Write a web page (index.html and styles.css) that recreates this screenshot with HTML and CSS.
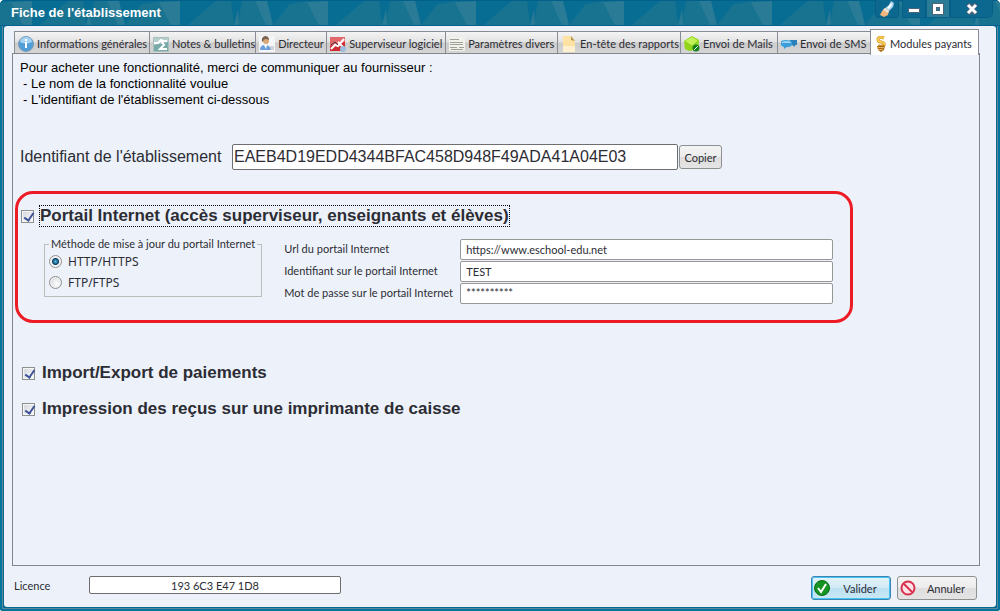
FILE: index.html
```html
<!DOCTYPE html>
<html lang="fr">
<head>
    <meta charset="UTF-8">
    <meta name="viewport" content="width=device-width, initial-scale=1.0">
    <title>Fiche de l'établissement</title>
    <link rel="stylesheet" href="styles.css">
</head>
<body>
    <div class="window">
        <header class="titlebar">
            <svg class="titlebar-pattern" width="100%" height="26" aria-hidden="true">
                <defs>
                    <pattern id="facets" x="33" width="148" height="26" patternUnits="userSpaceOnUse">
                        <rect width="148" height="26" fill="#086d93"/>
                        <path d="M7 25L35 1h15l3 24zM57 25l4-24h13l11 24z" fill="#187391"/>
                        <path d="M92 25l17-21 19-3 10 24z" fill="#187391"/>
                        <path d="M74 1h12l6 24h-7zM126 2l21-1v24h-9zM53 25l4-15 1 15z" fill="#2a7b95"/>
                    </pattern>
                </defs>
                <rect width="100%" height="26" fill="url(#facets)"/>
                <path d="M0 .5h3000M0 25.500h3000" stroke="#01618c"/>
            </svg>
            <h1>Fiche de l'établissement</h1>
            <div class="window-buttons">
                <button type="button" class="brush" aria-label="Apparence">
                    <svg width="16" height="18" viewBox="0 0 16 18">
                        <path d="M12 1l3 2-1 4-5 5-4-3 5-4z" fill="#a9d3f2"/>
                        <path d="M12 3l1 2-3 4-2-1z" fill="#fff"/>
                        <path d="M6 8l4 3-1 4-4 2-4-2 2-4z" fill="#f0b67c"/>
                        <path d="M6 8l4 3-1 2-5-3z" fill="#eee0d0"/>
                    </svg>
                </button>
                <button type="button" aria-label="Réduire">
                    <svg width="12" height="14" viewBox="0 0 12 14"><path d="M.5 6.500h11v4H.5z" fill="#fff" stroke="#4d6478"/></svg>
                </button>
                <button type="button" class="maximize" aria-label="Agrandir">
                    <svg width="12" height="12" viewBox="0 0 12 12"><path d="M2.500 2.500h7v7h-7z" fill="none" stroke="#4d6478" stroke-width="5"/><path d="M2.500 2.500h7v7h-7z" fill="none" stroke="#fff" stroke-width="3"/></svg>
                </button>
                <button type="button" class="close" aria-label="Fermer">
                    <svg width="14" height="12" viewBox="0 0 14 12"><path d="M3 1l8 10M11 1L3 11" stroke="#4d6478" stroke-width="5"/><path d="M3 2l8 8M11 2l-8 8" stroke="#fff" stroke-width="3"/></svg>
                </button>
            </div>
        </header>

        <main>
            <div class="tabs" role="tablist">
                <button type="button" role="tab">
                    <svg width="16" height="16" viewBox="0 0 16 16"><circle cx="8" cy="8" r="7.500" fill="#4f9ed8" stroke="#7f9db5"/><path d="M2 6a6 5 0 0 1 12 0q-6 3-12 0z" fill="#a6d3f3"/><path d="M8 3v2M7 7h1v5" stroke="#fff" stroke-width="2" fill="none"/></svg>
                    Informations générales
                </button>
                <button type="button" role="tab">
                    <svg width="16" height="16" viewBox="0 0 16 16"><path d="M.5 1.500h15v14H.5z" fill="#78aaa8" stroke="#a9bfbe"/><path d="M1 2h14v4L1 9z" fill="#b4cfcd"/><path d="M1 7h4l3-3 2 1M14 5H8l3 4-4 4h7" stroke="#fff" stroke-width="2" fill="none"/></svg>
                    Notes &amp; bulletins
                </button>
                <button type="button" role="tab">
                    <svg width="16" height="16" viewBox="0 0 16 16"><path d="M0 0h16v16H0z" fill="#f4f5f7"/><path d="M1 14q0-5 5-5t6 5z" fill="#6b9fdc"/><path d="M5 9h3l-1 4z" fill="#fff"/><circle cx="7" cy="5" r="3" fill="#d9a878"/><path d="M3 6q-1-5 3-6 4 0 4 4-4-2-5 0z" fill="#7b6450"/><path d="M11 11h4M11 13h4" stroke="#aab4c0"/></svg>
                    Directeur
                </button>
                <button type="button" role="tab">
                    <svg width="16" height="16" viewBox="0 0 16 16"><path d="M0 1h15v14H0z" fill="#cf2b32"/><path d="M0 1h15v5L0 10z" fill="#e3686c"/><path d="M1 13l4-4 3 1 6-7M8 6l6 6" stroke="#fff" stroke-width="2" fill="none"/><path d="M1 9l4-3 3 3" stroke="#45313a" fill="none"/><circle cx="13" cy="13" r="3" fill="#9dbddf"/></svg>
                    Superviseur logiciel
                </button>
                <button type="button" role="tab">
                    <svg width="16" height="16" viewBox="0 0 16 16"><path d="M0 1h16v14H0z" fill="#f1f1ec"/><path d="M1 3.500h9M1 6.500h13M1 8.500h13M1 11.500h7M10 11.500h5M2 13.500h12" stroke="#9da196"/></svg>
                    Paramètres divers
                </button>
                <button type="button" role="tab">
                    <svg width="16" height="16" viewBox="0 0 16 16"><path d="M2 0h8l4 5v11H2z" fill="#fde2a4"/><path d="M2 10h12v6H2z" fill="#fff0cf"/><path d="M10 0l4 5-4-1z" fill="#b99756"/></svg>
                    En-tête des rapports
                </button>
                <button type="button" role="tab">
                    <svg width="16" height="16" viewBox="0 0 16 16"><path d="M0 5l8-5 7 4-1 9-9 2-4-2z" fill="#91d718"/><path d="M1 5l7-4 6 4-6 5z" fill="#c2f255"/><path d="M1 6l7 4 6-5" stroke="#8ecb28" fill="none"/><circle cx="12" cy="12" r="3.500" fill="#14841f"/><path d="M10 14l4-4" stroke="#fff" fill="none"/></svg>
                    Envoi de Mails
                </button>
                <button type="button" role="tab">
                    <svg width="16" height="16" viewBox="0 0 16 16"><path d="M9 4h7v5h-2v2l-3-2H9z" fill="#2b82ba"/><path d="M0 6q0-2 5-2t6 2v3q-1 2-5 2l-3 2v-2q-3-1-3-2z" fill="#3c9fdb"/><path d="M1 6q4-2 9 0v1H1z" fill="#9cd6f5"/></svg>
                    Envoi de SMS
                </button>
                <button type="button" role="tab" class="active" aria-selected="true">
                    <svg width="10" height="16" viewBox="0 0 10 16"><path d="M8 2Q3 0 2 3q0 3 3 3 4 1 3 3-1 2-6 1" stroke="#c98b22" stroke-width="3" fill="none"/><path d="M8 2Q3 0 2 3q0 3 3 3 4 1 3 3" stroke="#f8cb52" stroke-width="2" fill="none"/><path d="M1 10h8l-1 4-3 2-3-2z" fill="#a8691d"/><path d="M1 11.500h7M2 13.500h5" stroke="#e6b455"/></svg>
                    Modules payants
                </button>
            </div>

            <section class="panel">
                <p class="intro">Pour acheter une fonctionnalité, merci de communiquer au fournisseur :<br>
                    <span>- Le nom de la fonctionnalité voulue</span><br>
                    <span>- L'identifiant de l'établissement ci-dessous</span></p>

                <div class="identifier">
                    <label for="identifier">Identifiant de l'établissement</label>
                    <input type="text" id="identifier" value="EAEB4D19EDD4344BFAC458D948F49ADA41A04E03">
                    <button type="button" class="button">Copier</button>
                </div>

                <div class="portal">
                    <label class="module">
                        <input type="checkbox" checked>
                        <span class="focused">Portail Internet (accès superviseur, enseignants et élèves)</span>
                    </label>
                    <div class="portal-settings">
                        <fieldset>
                            <legend>Méthode de mise à jour du portail Internet</legend>
                            <label><input type="radio" name="method" checked>HTTP/HTTPS</label>
                            <label><input type="radio" name="method">FTP/FTPS</label>
                        </fieldset>
                        <div class="portal-fields">
                            <label for="url">Url du portail Internet</label>
                            <input type="text" id="url" value="https://www.eschool-edu.net">
                            <label for="login">Identifiant sur le portail Internet</label>
                            <input type="text" id="login" value="TEST">
                            <label for="password">Mot de passe sur le portail Internet</label>
                            <input type="text" id="password" class="password" value="**********">
                        </div>
                    </div>
                </div>

                <div class="modules">
                    <label class="module"><input type="checkbox" checked><span>Import/Export de paiements</span></label>
                    <label class="module"><input type="checkbox" checked><span>Impression des reçus sur une imprimante de caisse</span></label>
                </div>
            </section>

            <footer>
                <label for="licence">Licence</label>
                <input type="text" id="licence" value="193 6C3 E47 1D8">
                <div class="actions">
                    <button type="submit" class="button primary">
                        <svg width="16" height="16" viewBox="0 0 16 16"><circle cx="8" cy="8" r="7.500" fill="#159323" stroke="#0b6c17"/><path d="M4 8l3 4 5-8" stroke="#fff" stroke-width="2" fill="none"/></svg>
                        <span>Valider</span>
                    </button>
                    <button type="button" class="button">
                        <svg width="16" height="16" viewBox="0 0 16 16"><circle cx="8" cy="8" r="6.500" stroke="#d9304f" stroke-width="2" fill="#f8e3e7"/><path d="M4 4l8 8" stroke="#d9304f" stroke-width="2"/></svg>
                        <span>Annuler</span>
                    </button>
                </div>
            </footer>
        </main>
    </div>
</body>
</html>
```
FILE: styles.css
```css
* {
    box-sizing: border-box;
}
body {
    margin: 0;
    background: #fff;
    color: #2c2c34;
    font-family: Lato, "Liberation Sans", sans-serif;
    font-size: 11px;
}
button, input {
    font-family: inherit;
    font-size: inherit;
    color: inherit;
    margin: 0;
}
svg {
    display: block;
    flex: none;
}
.window {
    display: flex;
    flex-direction: column;
    min-height: 100vh;
    padding: 0 4px 4px;
    background: #02688f;
    border-radius: 5px 5px 3px 3px;
    box-shadow: inset 0 0 0 2px #02759c, inset 0 0 0 3px #60889a;
    overflow: hidden;
}

/* title bar */
.titlebar {
    position: relative;
    display: flex;
    justify-content: space-between;
    height: 26px;
    margin: 0 -4px;
    padding-left: 11px;
    flex: none;
}
.titlebar-pattern {
    position: absolute;
    top: 0;
    left: 0;
}
h1 {
    position: relative;
    margin: 0;
    color: #fff;
    font-family: "Liberation Sans", Arial, sans-serif;
    font-size: 13px;
    line-height: 25px;
}
.window-buttons {
    position: relative;
    display: flex;
    height: 18px;
    margin-right: 7px;
}
.window-buttons button {
    display: flex;
    align-items: center;
    justify-content: center;
    width: 24px;
    padding: 0;
    border: 1px solid #075f87;
    border-top: 0;
    background: #0d6890;
}
.window-buttons .brush {
    margin-right: 3px;
    border-radius: 0 0 4px 4px;
}
.window-buttons .maximize {
    background: #2a7b95;
}
.window-buttons .close {
    width: 43px;
    border-radius: 0 0 5px 0;
}

/* window content */
main {
    display: flex;
    flex-direction: column;
    flex: 1;
    padding: 3px 16px 7px 8px;
    background: #edf2fa;
    border-radius: 3px;
}
.tabs {
    display: grid;
    grid-template-columns: 135fr 106fr 71fr 119fr 112fr 123fr 97fr 93fr 109fr;
    align-items: end;
    height: 25px;
    margin: 0 1px 0 2px;
}
.tabs button {
    display: flex;
    align-items: center;
    gap: 3px;
    height: 23px;
    padding: 1px 0 0 3px;
    border: 1px solid #898c95;
    border-width: 1px 0 0 1px;
    background: linear-gradient(#f4f4f4, #e2e2e2 45%, #cbcbcb 50%, #d6d6d6);
    white-space: nowrap;
}
.tabs .active {
    position: relative;
    height: 26px;
    margin-bottom: -1px;
    gap: 4px;
    padding: 2px 0 0 5px;
    border-right-width: 1px;
    background: #fff;
}
.panel {
    flex: 1;
    padding: 6px 7px;
    border: 1px solid #84868c;
    margin-top: -1px;
}
.intro {
    margin: 0;
    color: #000;
    font-family: "Liberation Sans", Arial, sans-serif;
    font-size: 13px;
    line-height: 16px;
}
.intro span {
    padding-left: 3px;
}
.identifier {
    display: flex;
    align-items: center;
    gap: 1px;
    margin-top: 36px;
    font-family: "Liberation Sans", Arial, sans-serif;
    font-size: 16px;
}
.identifier label {
    flex: 0 0 211px;
}
.identifier input {
    flex: 0 1 446px;
    min-width: 0;
    height: 26px;
}
input[type="text"] {
    padding: 0 1px;
    border: 1px solid #6e6e6e;
    border-radius: 2px;
    background: #fff;
    outline: 0;
}
.button {
    display: flex;
    align-items: center;
    justify-content: center;
    height: 24px;
    padding: 0 4px;
    border: 1px solid #8e8f8f;
    border-radius: 3px;
    background: linear-gradient(#f4f4f4, #ececec 50%, #dedede 50%, #e4e4e4);
    font-family: Lato, "Liberation Sans", sans-serif;
    font-size: 11px;
}
.identifier .button {
    width: 43px;
}

/* highlighted module */
.portal {
    width: 88%;
    height: 132px;
    margin: 21px 0 0 -5px;
    padding: 12px 17px 0 3px;
    border: 3px solid #ed1c24;
    border-radius: 18px;
}
.module {
    display: flex;
    align-items: center;
    gap: 6px;
    font-family: "Liberation Sans", Arial, sans-serif;
    font-size: 17px;
    font-weight: bold;
    line-height: 20px;
}
input[type="checkbox"] {
    appearance: none;
    width: 13px;
    height: 13px;
    border: 1px solid #8e8f8f;
    background: linear-gradient(135deg, #cfd3da, #fff);
    box-shadow: inset 0 0 0 1px #f6f6f6;
    position: relative;
}
input[type="checkbox"]:checked::after {
    content: "";
    position: absolute;
    top: 0;
    left: 4px;
    width: 4px;
    height: 8px;
    border: solid #3c5196;
    border-width: 0 2px 2px 0;
    transform: rotate(35deg);
}
.focused {
    outline: 1px dotted #000;
}
.portal-settings {
    display: flex;
    gap: 22px;
    padding-left: 23px;
    margin-top: 11px;
}
fieldset {
    width: 218px;
    height: 60px;
    margin: 0;
    padding: 0 4px;
    border: 1px solid #bcbcbc;
    flex: none;
}
legend {
    padding: 0 2px;
    line-height: 14px;
    white-space: nowrap;
}
fieldset label {
    display: flex;
    align-items: center;
    gap: 6px;
    height: 21px;
    font-family: "Noto Sans", sans-serif;
    font-size: 12px;
}
input[type="radio"] {
    appearance: none;
    width: 13px;
    height: 13px;
    border: 1px solid #8e8f8f;
    border-radius: 50%;
    background: radial-gradient(circle at 60% 60%, #fff, #c9cdd2);
    box-shadow: inset 0 0 0 1px #f6f6f6;
}
input[type="radio"]:checked {
    background: radial-gradient(circle, #58c3e8, #0a3f66 3px, #f0f0f0 4px);
}
.portal-fields {
    display: grid;
    grid-template-columns: 176px 1fr;
    gap: 1px 0;
    flex: 1;
    align-content: start;
    padding-top: 2px;
    line-height: 19px;
}
.portal-fields input {
    height: 21px;
    padding: 0 5px;
    border-color: #979797;
    min-width: 0;
}
.portal-fields .password {
    padding-bottom: 3px;
}
.modules {
    display: grid;
    gap: 16px;
    margin: 40px 0 0 2px;
}
.modules .module {
    gap: 7px;
}

/* licence and actions */
footer {
    display: flex;
    align-items: center;
    height: 32px;
    margin: 6px 3px -4px 2px;
    flex: none;
}
footer > label {
    flex: 0 0 75px;
    padding-bottom: 6px;
}
footer > input[type="text"] {
    width: 252px;
    height: 18px;
    margin-bottom: 6px;
    text-align: center;
}
.actions {
    display: flex;
    gap: 6px;
    margin-left: auto;
}
.actions .button {
    width: 80px;
    padding: 0 2px;
}
.actions span {
    flex: 1;
    text-align: center;
    padding-left: 2px;
}
.actions .primary {
    border-color: #3b84b3;
    box-shadow: inset 0 0 0 1px #46c4f2;
    background: linear-gradient(#e6f3f9, #cfe9f5 50%, #bce0f1 50%, #c9e8f5);
}
```
